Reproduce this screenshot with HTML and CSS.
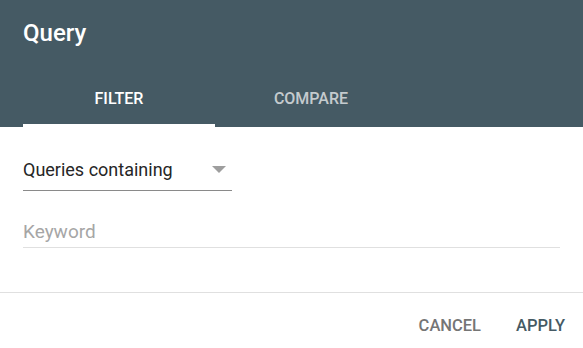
FILE: index.html
```html
<!DOCTYPE html>
<html lang="en">

<head>
  <meta charset="UTF-8">
  <meta name="viewport" content="width=device-width, initial-scale=1.0" />
  <title>Query</title>
  <link rel="stylesheet" href="styles.css">
</head>

<body>

  <div class="dialog">
    <div class="dialog-header">
      <h1 class="dialog-title">Query</h1>
      <div class="tabs">
        <div class="tab active">FILTER</div>
        <div class="tab">COMPARE</div>
      </div>
    </div>

    <div class="dialog-body">
      <div class="select">
        <span class="select-label">Queries containing</span>
        <span class="select-arrow"></span>
      </div>
      <input class="keyword" type="text" placeholder="Keyword" />
    </div>

    <div class="dialog-actions">
      <button class="action cancel">CANCEL</button>
      <button class="action apply">APPLY</button>
    </div>
  </div>

</body>

</html>
```

FILE: styles.css
```css
:root {
  --header-bg: #455a64;
  --text-color: #262626;
  --hint-color: #a6a6a6;
  --line-color: #e0e0e0;
  --font-family: Roboto, 'Liberation Sans', sans-serif;
}

* {
  margin: 0;
  padding: 0;
  box-sizing: border-box;
}

body {
  background: #fff;
  font-family: var(--font-family);
  color: var(--text-color);
}

.dialog {
  width: 583px;
  height: 348px;
  display: flex;
  flex-direction: column;
}

.dialog-header {
  background: var(--header-bg);
  height: 127px;
  padding: 17px 23px 0;
}

.dialog-title {
  font-size: 24px;
  font-weight: 500;
  line-height: 32px;
  color: #fff;
}

.tabs {
  display: flex;
  margin-top: 27px;
}

.tab {
  width: 192px;
  height: 51px;
  line-height: 46px;
  text-align: center;
  font-size: 16px;
  font-weight: 500;
  color: rgba(255, 255, 255, 0.7);
  border-bottom: 3px solid transparent;
}

.tab.active {
  color: #fff;
  border-bottom-color: #fff;
}

.dialog-body {
  flex: 1;
  padding: 31px 23px 0;
  border-bottom: 1px solid var(--line-color);
}

.select {
  width: 209px;
  display: flex;
  align-items: center;
  justify-content: space-between;
  padding: 0 6px 8px 0;
  border-bottom: 1px solid #8a8a8a;
}

.select-label {
  font-size: 18px;
  line-height: 24px;
}

.select-arrow {
  width: 0;
  height: 0;
  margin-top: -2px;
  border-left: 7px solid transparent;
  border-right: 7px solid transparent;
  border-top: 7px solid #9e9e9e;
}

.keyword {
  display: block;
  width: 100%;
  margin-top: 28px;
  padding: 0 0 4px;
  border: none;
  border-bottom: 1px solid var(--line-color);
  font-family: var(--font-family);
  font-size: 19px;
  line-height: 24px;
  height: 29px;
  outline: none;
  color: var(--text-color);
}

::placeholder {
  color: var(--hint-color);
  opacity: 1;
}

.dialog-actions {
  height: 55px;
  display: flex;
  justify-content: flex-end;
  align-items: flex-start;
  gap: 35px;
  padding: 15px 18px 0 0;
}

.action {
  background: none;
  border: none;
  font-family: var(--font-family);
  font-size: 16.5px;
  font-weight: 500;
  line-height: 36px;
  cursor: pointer;
}

.cancel {
  color: #757575;
}

.apply {
  color: var(--header-bg);
}
```
